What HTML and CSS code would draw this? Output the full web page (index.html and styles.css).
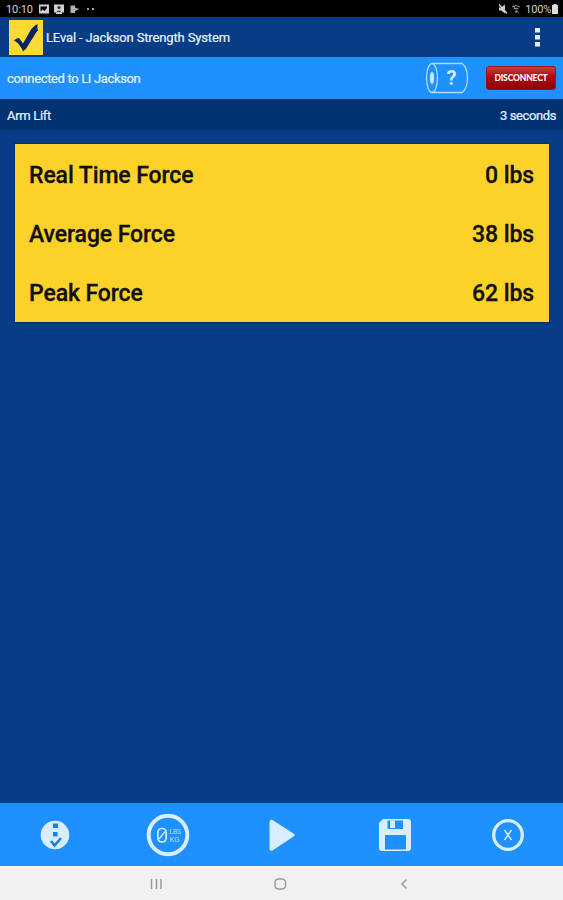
FILE: index.html
```html
<!DOCTYPE html>
<html lang="en">
<head>
<meta charset="utf-8">
<title>LEval - Jackson Strength System</title>
<link rel="stylesheet" href="styles.css">
</head>
<body>
<div class="app">
  <div class="status">
    <span class="clock">10:10</span>
    <svg class="status-left" width="60" height="17" viewBox="0 0 60 17" fill="#d0d0d0">
      <path d="M1 3.500h10v9H1zM2.500 5.500v5l2-2 2 1.500 2.500-3v-1.500z" fill-rule="evenodd"/>
      <path d="M16 3.500h10v8h-2.500l1 1.500h-7l1-1.500H16z"/><circle cx="21" cy="6.500" r="1.600" fill="#333"/><path d="M18.500 11q2.500-3 5 0z" fill="#333"/>
      <path d="M32.500 4.500h4.500v2l4 1.500-4 2v2h-4.500z" opacity=".85"/>
      <circle cx="50" cy="8" r="1"/><circle cx="55" cy="8" r="1"/>
    </svg>
    <span class="grow"></span>
    <svg class="status-right" width="24" height="17" viewBox="0 0 24 17" fill="none" stroke="#ccc">
      <path d="M0 6.500h2l4-3v9L2 9.500H0z" fill="#ccc" stroke="none"/><path d="M0 3.500l8 9" stroke-width="1.500"/>
      <path d="M13 6q4-3 8 0M14.500 8q2.500-2 5 0M16 10l1 1.500 1-1.500" opacity=".75"/><path d="M14 4.500l6 8" opacity=".6"/>
    </svg>
    <span class="battery-text">100%</span>
    <svg class="battery" width="6" height="10" viewBox="0 0 6 10"><path d="M1.500 0h3v1H6v9H0V1h1.500z" fill="#ddd"/></svg>
  </div>
  <header class="title-bar">
    <svg class="logo" width="34" height="35" viewBox="0 0 34 35">
      <rect width="34" height="35" fill="#fcda36"/>
      <path d="M5 20.500q2.500-2.800 5-2.500l4 5.500L22 9.500q3-4 6.500-5.500-.5 4 .5 6.500-1.500 1-3 4L16.500 29.500q-1.500.5-2.500 2-1-3-3-5.500-2.500-4-6-5.500z" fill="#08265e"/>
    </svg>
    <h1>LEval - Jackson Strength System</h1>
    <svg class="menu" width="5" height="19" viewBox="0 0 5 19" fill="#e4effb"><rect y="0" width="5" height="4.500"/><rect y="7" width="5" height="4.500"/><rect y="14" width="5" height="4.500"/></svg>
  </header>
  <div class="connection">
    <span>connected to LI Jackson</span>
    <svg class="sensor" width="44" height="32" viewBox="0 0 44 32" fill="none" stroke="#b0daff" stroke-width="1.300">
      <path d="M7 1.500h30q5.500 4 5.500 14.500T37 30.500H7"/>
      <ellipse cx="7" cy="16" rx="5.500" ry="14.500"/><ellipse cx="7" cy="16" rx="1.600" ry="5.500" fill="#d6ecff"/>
      <text x="26.500" y="22.500" class="sensor-label">?</text>
    </svg>
    <button class="disconnect">DISCONNECT</button>
  </div>
  <div class="test-bar"><span>Arm Lift</span><span class="duration">3 seconds</span></div>
  <main>
    <dl class="readings">
      <div><dt>Real Time Force</dt><dd>0 lbs</dd></div>
      <div><dt>Average Force</dt><dd>38 lbs</dd></div>
      <div><dt>Peak Force</dt><dd>62 lbs</dd></div>
    </dl>
  </main>
  <div class="actions">
    <svg viewBox="0 0 44 44"><circle cx="22" cy="22" r="14.300" fill="#d8eeff"/><path d="M20 10.500h5v4.500h-5zM20 19h4.500v4.500H20z" fill="#1780e8"/><path d="M18 28l3.500 4.500L28 25" fill="none" stroke="#1780e8" stroke-width="2.500"/></svg>
    <svg viewBox="0 0 44 44"><circle cx="22" cy="22" r="19.300" fill="none" stroke="#d8eeff" stroke-width="4"/><rect x="11.800" y="15.500" width="8.400" height="13.500" rx="4" fill="none" stroke="#d8eeff" stroke-width="1.700"/><path d="M19 18.500l-6 7.500" stroke="#d8eeff" stroke-width="1.300"/><text x="23.500" y="20.500" class="unit" textLength="11.500" lengthAdjust="spacingAndGlyphs">LBS</text><text x="23.500" y="28.500" class="unit" textLength="10" lengthAdjust="spacingAndGlyphs">KG</text></svg>
    <svg viewBox="0 0 44 44"><path d="M12.500 7L33.500 20.500q2.500 1.500 0 3L12.500 37.500q-3 1-3-2V9q0-3 3-2z" fill="#d8eeff"/></svg>
    <svg viewBox="0 0 44 44"><path d="M10 6h25q3 0 3 3v26q0 3-3 3H9q-3 0-3-3V10z" fill="#d8eeff"/><path d="M14.500 7.500H30V16H14.500zM12 22h21v14.500H12z" fill="#1e90ff"/><path d="M17 7.500h5v7.500h-5z" fill="#d8eeff"/></svg>
    <svg viewBox="0 0 44 44"><circle cx="22" cy="22" r="14.300" fill="none" stroke="#d8eeff" stroke-width="3.300"/><path d="M18.500 17l7 10M25.500 17l-7 10" stroke="#d8eeff" stroke-width="1.500"/></svg>
  </div>
  <nav class="system-nav">
    <svg viewBox="0 0 16 16"><path d="M3.500 3v10M8.500 3v10M13 3v10"/></svg>
    <svg viewBox="0 0 16 16"><rect x="3" y="3" width="10.500" height="10" rx="3.500"/></svg>
    <svg viewBox="0 0 16 16"><path d="M10.500 3.500L6 8l4.500 4.500"/></svg>
  </nav>
</div>
</body>
</html>
```
FILE: styles.css
```css
* { box-sizing: border-box; }
body { margin: 0; font-family: Roboto, sans-serif; }
.app { width: 563px; height: 900px; display: flex; flex-direction: column; background: #063d86; color: #e6f2ff; }
.status { height: 17px; background: #000; display: flex; align-items: center; padding: 1px 5px 0 6px; color: #d0d0d0; font-size: 11px; }
.clock { width: 32px; letter-spacing: -0.1px; }
.grow { flex: 1; }
.status-right { margin-right: 2px; }
.battery-text { letter-spacing: -0.2px; }
.battery { margin-left: 1px; }
.title-bar { height: 40px; display: flex; align-items: center; padding: 0 23px 0 9px; background: #063d86; }
.title-bar h1 { flex: 1; margin: 0 0 0 3px; font-size: 13px; font-weight: 400; letter-spacing: -0.14px; -webkit-text-stroke: 0.2px; }
.connection { height: 42px; background: #1e90ff; display: flex; align-items: center; padding: 0 7px; font-size: 13px; }
.connection span { flex: 1; letter-spacing: -0.35px; -webkit-text-stroke: 0.2px; }
.sensor { margin-right: 17px; }
.sensor-label { fill: #d6ecff; stroke: none; font: 700 20px Roboto, sans-serif; text-anchor: middle; }
.disconnect { width: 70px; height: 24px; padding: 0; border: 1px solid #98171d; border-radius: 3px; background: linear-gradient(#c84043, #ad090c 45%, #900004); color: #fff; font: 900 8.5px Lato, sans-serif; letter-spacing: -0.15px; }
.test-bar { height: 31px; background: #033273; display: flex; align-items: center; justify-content: space-between; padding: 1px 7px 0; font-size: 13px; letter-spacing: -0.3px; -webkit-text-stroke: 0.2px; }
.duration { letter-spacing: -0.4px; }
main { flex: 1; padding: 14px 14px 0 15px; }
.readings { height: 178px; margin: 0; background: #fcd128; color: #10110e; display: flex; flex-direction: column; box-shadow: 0 0 1px 1px #07336d; padding-top: 1px; }
.readings div { flex: 1; display: flex; align-items: center; justify-content: space-between; padding: 2px 15px 0 14px; font-size: 23px; font-weight: 500; letter-spacing: -0.1px; -webkit-text-stroke: 0.3px; }
dd { margin: 0; }
.actions { height: 63px; background: #1e90ff; display: grid; grid-template-columns: repeat(5, 44px); justify-content: space-between; align-items: center; padding: 1px 33px 0; }
.actions svg { width: 44px; height: 44px; }
.unit { font: 6.5px Roboto, sans-serif; fill: #d8eeff; opacity: 0.8; }
.system-nav { height: 34px; background: #f1f1f1; border-top: 1px solid #fff; display: grid; grid-template-columns: repeat(3, 16px); column-gap: 108px; padding: 9px 0 0 148px; }
.system-nav svg { width: 16px; height: 16px; fill: none; stroke: #9b9b9b; stroke-width: 1.5; }
```
